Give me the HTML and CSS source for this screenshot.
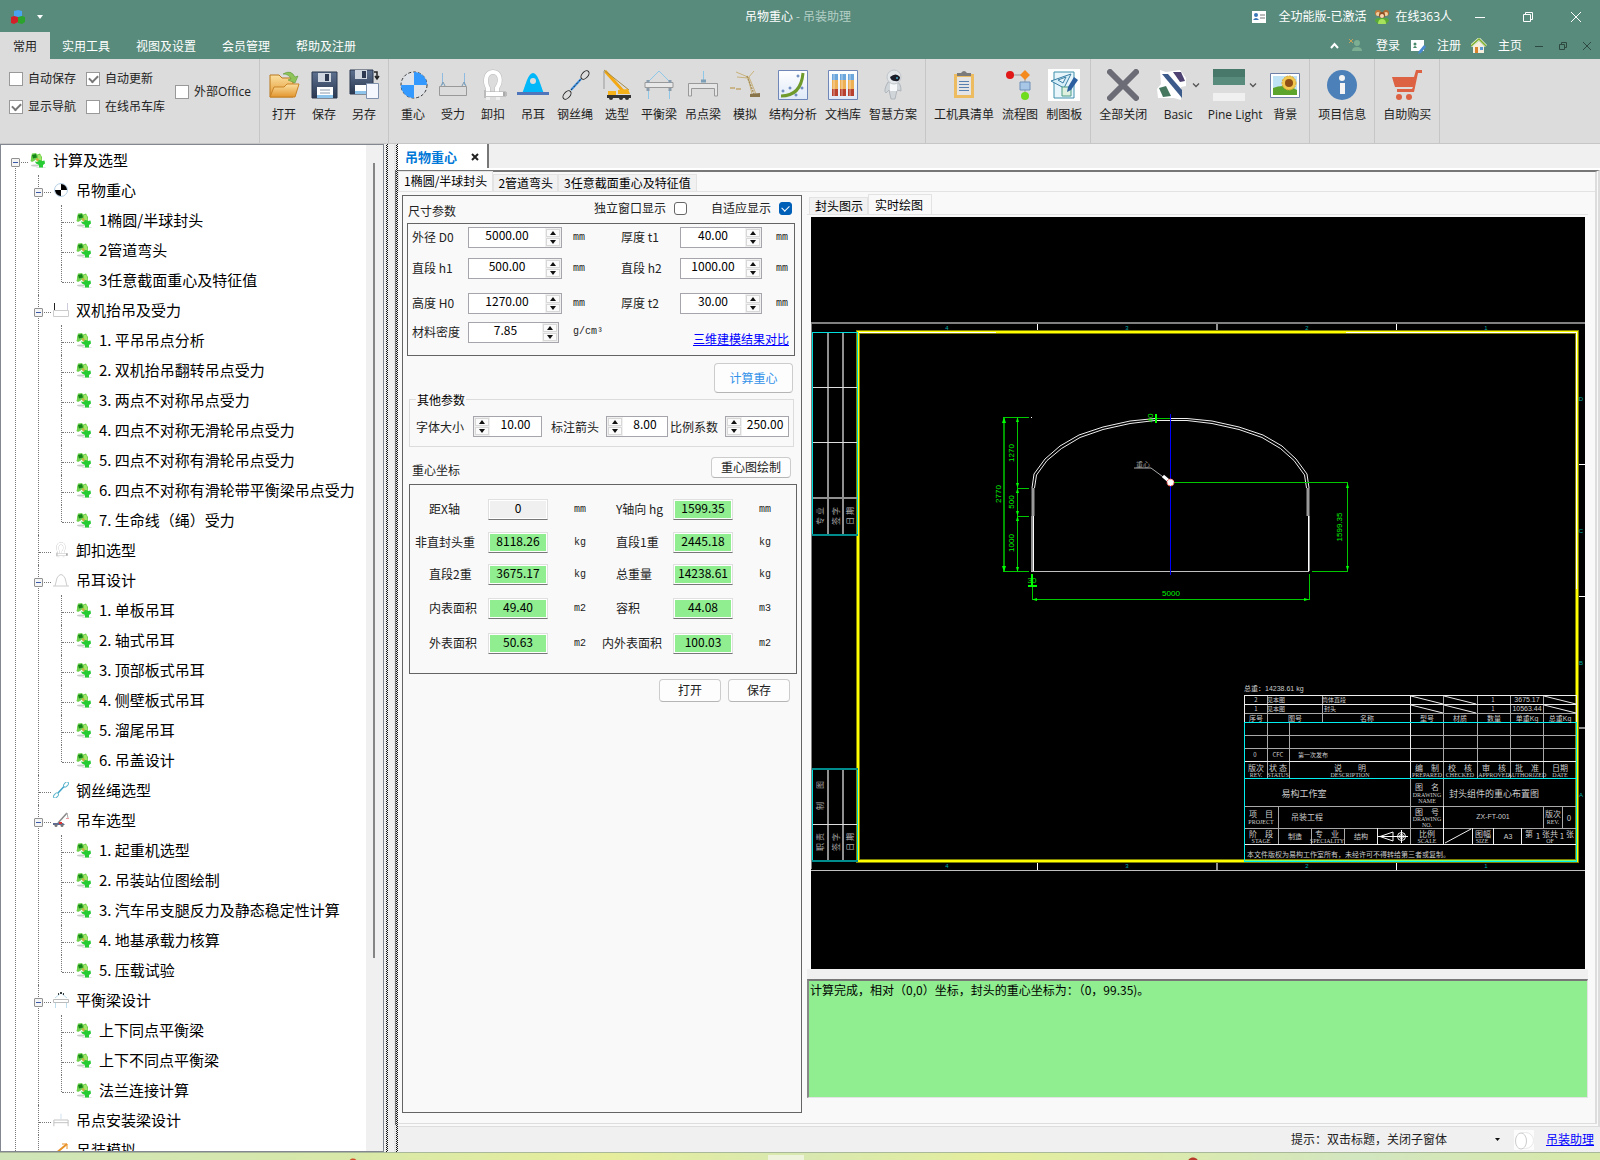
FILE: index.html
```html
<!DOCTYPE html>
<html lang="zh-CN">
<head>
<meta charset="utf-8">
<title>吊物重心 - 吊装助理</title>
<link rel="stylesheet" href="styles.css">
</head>
<body>
<svg class="defs" width="0" height="0" aria-hidden="true">
  <defs>
    <linearGradient id="gFolder" x1="0" y1="0" x2="0" y2="1"><stop offset="0" stop-color="#fbe0a0"/><stop offset="1" stop-color="#e3962f"/></linearGradient>
    <linearGradient id="gDisk" x1="0" y1="0" x2="0" y2="1"><stop offset="0" stop-color="#5d7190"/><stop offset="1" stop-color="#2b3850"/></linearGradient>
    <linearGradient id="gCard" x1="0" y1="0" x2="0" y2="1"><stop offset="0" stop-color="#ffffff"/><stop offset="1" stop-color="#dfe9f8"/></linearGradient>
  </defs>
  <symbol id="puzzle" viewBox="0 0 16 16">
    <ellipse cx="5" cy="13.500" rx="4" ry="1" fill="#c8ccc8"/><ellipse cx="11" cy="15.500" rx="5" ry=".8" fill="#dfe6df"/>
    <path d="M1 5L2 1.500 6 1 7 2.500 10 1.500 12 5 12 9 8 10 6 7.500 4 9 2 10 .5 9 1 7z" fill="#6fd24e"/>
    <path d="M2 3L6 2 7 5.500 3 6.500z" fill="#128418"/><path d="M8 3L10.500 3 11.500 8 8 8z" fill="#a4e66a"/><path d="M6 6l3 1-1 3-2-2z" fill="#c8b040"/>
    <path d="M5 9.500L8 10 9 8 12 9 14.500 8.500 15 11.500 13 13 13 15.500 9 15.500 9 13 6 11.500z" fill="#27cc35"/>
  </symbol>
  <symbol id="cgball" viewBox="0 0 16 16"><circle cx="8" cy="8" r="6.500" fill="#fff" stroke="#b4cfe6"/><path d="M8 8V2A6 6 0 0 1 14 8ZM8 8V14A6 6 0 0 1 2 8Z" fill="#000"/></symbol>
  <symbol id="lift" viewBox="0 0 16 16"><path d="M.5 8.500h15v6h-15z" fill="none" stroke="#ccc"/><path d="M1.500 1v7" stroke="#222"/><path d="M14.500 1v7" stroke="#ccd"/></symbol>
  <symbol id="shackle" viewBox="0 0 32 32"><path d="M11 25V19C7 12 9 3 16 3S25 12 20 19V25" fill="none" stroke="#bbb" stroke-width="5"/><path d="M11 25V19C7 12 9 3 16 3S25 12 20 19V25" fill="none" stroke="#fff" stroke-width="4"/><path d="M7 25h22" stroke="#aaa" stroke-width="5"/><path d="M8 25h18" stroke="#fff" stroke-width="4"/><path d="M8 21v8M29 23v4" stroke="#bbb" stroke-width="2"/><path d="M11 28v3M21 28v3" stroke="#eee" stroke-width="4"/></symbol>
  <symbol id="lug" viewBox="0 0 16 16"><path d="M0 14h16M2 14L4 6Q8-1 12 6L14 14" fill="none" stroke="#ccc"/></symbol>
  <symbol id="sling" viewBox="0 0 32 32"><path d="M12 21L22 10" stroke="#3a8fe0" stroke-width="2"/><path d="M12 21L22 10" stroke="#234" stroke-width="1" stroke-dasharray="2 2"/><ellipse cx="26" cy="6" rx="5" ry="3" transform="rotate(-48 26 6)" fill="none" stroke="currentColor"/><ellipse cx="8" cy="26" rx="5" ry="3" transform="rotate(-48 8 26)" fill="none" stroke="currentColor"/></symbol>
  <symbol id="slingmini" viewBox="0 0 16 16"><path d="M5 11L11 4.500" stroke="#3fa3c8" stroke-width="1.500"/><ellipse cx="13" cy="2.500" rx="3" ry="1.800" transform="rotate(-48 13 2.500)" fill="none" stroke="#5fb6cc"/><ellipse cx="3" cy="13.500" rx="3" ry="1.800" transform="rotate(-48 3 13.500)" fill="none" stroke="#5fb6cc"/></symbol>
  <symbol id="minicrane" viewBox="0 0 16 16"><path d="M5 11L14 1" fill="none" stroke="#888" stroke-width="1.500"/><path d="M14 1l1 5" stroke="#aaa"/><path d="M0 11h10l2 2H0z" fill="#5b6b94"/><path d="M6 10h3v2H6z" fill="#d33"/><circle cx="3" cy="13.500" r="1.500" fill="#777"/><circle cx="9" cy="13.500" r="1.500" fill="#777"/><path d="M13 6h3v1h-3z" fill="#e99"/></symbol>
  <symbol id="minibeam" viewBox="0 0 16 16"><path d="M2 6L8 1L14 6" fill="none" stroke="#bde"/><path d="M7 1h2M5 2h1M10 2h1" stroke="#000" stroke-width="1.500"/><path d="M.5 7.500h15v3h-15z" fill="#fff" stroke="#bbb"/><path d="M2.500 11v5M13.500 11v5" stroke="#bde"/></symbol>
  <symbol id="minibar" viewBox="0 0 18 16"><path d="M9 1v6" stroke="#cde"/><path d="M1 15V8h16v7M1 11h16" fill="none" stroke="#bbb"/></symbol>
  <symbol id="minisim" viewBox="0 0 16 16"><path d="M2 12L14 2" stroke="#e8922a" stroke-width="2"/><path d="M9 2h5v5" fill="none" stroke="#e8922a"/></symbol>
  <symbol id="chev" viewBox="0 0 8 8"><path d="M1 2.500l3 3 3-3" fill="none" stroke="#555" stroke-width="1.300"/></symbol>
</svg>

<header class="titlebar">
  <div class="quick">
    <svg width="16" height="16" viewBox="0 0 16 16"><path d="M4 2l4-1 4 1v5l-4 2-4-2z" fill="#4aa3ee"/><path d="M1 8l3-1 4 1v5l-4 2-3-1z" fill="#d2202a"/><path d="M8 8l4-1 3 1v5l-3 2-4-1z" fill="#2ca32c"/></svg>
    <svg width="6" height="4" viewBox="0 0 6 4"><path d="M0 0h6L3 4z" fill="#fff"/></svg>
  </div>
  <h1 class="caption">吊物重心 <span>- 吊装助理</span></h1>
  <div class="status-right">
    <svg class="idcard" width="14" height="12" viewBox="0 0 14 12"><path d="M0 0h14v12H0z" fill="#fff"/><circle cx="4" cy="4" r="2" fill="#3b78b8"/><path d="M1 9q3-4 6 0z" fill="#3b78b8"/><path d="M8 4h5M8 7h5" stroke="#777"/></svg>
    <span>全功能版-已激活</span>
    <svg class="faces" width="16" height="16" viewBox="0 0 16 16"><path d="M1 12q0-3 4-3h6q4 0 4 3l-3 3H4z" fill="#58a838"/><circle cx="4" cy="4" r="3" fill="#c07a3c"/><circle cx="12" cy="4" r="3" fill="#b06a30"/><circle cx="4" cy="5" r="2" fill="#f3cda0"/><circle cx="12" cy="5" r="2" fill="#f3cda0"/><circle cx="8" cy="6" r="3" fill="#8f4e22"/><circle cx="8" cy="7" r="2" fill="#f7d8b4"/><path d="M4 15q0-5 4-5t4 5z" fill="#a6e25c"/></svg>
    <span>在线363人</span>
    <div class="winbtns">
      <button aria-label="最小化"><svg width="12" height="12" viewBox="0 0 12 12"><path d="M1 6.500h10" stroke="#fff"/></svg></button>
      <button aria-label="还原"><svg width="12" height="12" viewBox="0 0 12 12"><path d="M1.500 3.500h7v7h-7zM3.500 3V1.500h7v7H9" fill="none" stroke="#fff"/></svg></button>
      <button aria-label="关闭"><svg width="12" height="12" viewBox="0 0 12 12"><path d="M1 1l10 10M11 1L1 11" stroke="#fff"/></svg></button>
    </div>
  </div>
</header>

<nav class="menubar">
  <button class="active">常用</button><button>实用工具</button><button>视图及设置</button><button>会员管理</button><button>帮助及注册</button>
  <div class="account">
    <svg width="9" height="8" viewBox="0 0 9 8"><path d="M1 6l3.500-4L8 6" fill="none" stroke="#fff" stroke-width="2"/></svg>
    <a href="#"><svg width="16" height="16" viewBox="0 0 16 16"><path d="M0 1l4 4M4 1L0 5" stroke="#c9a25a"/><circle cx="8" cy="5" r="3" fill="#7cae93"/><path d="M3 13q0-4 5-4t5 4z" fill="#7cae93"/></svg>登录</a>
    <a href="#"><svg width="16" height="16" viewBox="0 0 16 16"><path d="M1 2h13v11H1z" fill="#fff"/><circle cx="5" cy="6" r="1.500" fill="#4a8a6a"/><path d="M3 10q2-4 4 0z" fill="#4a8a6a"/><path d="M14 7l2 2-5 6-3 1 1-3z" fill="#4a8ad0"/></svg>注册</a>
    <a href="#"><svg width="16" height="16" viewBox="0 0 16 16"><path d="M2 8v7h11V8L8 3z" fill="#f6efe0"/><path d="M0 8l8-7 7 7" fill="none" stroke="#e8f4d8" stroke-width="3"/><path d="M0 8l8-7 7 7" fill="none" stroke="#7fae2e" stroke-width="1.500"/><path d="M4 9h3v6H4z" fill="#d8832c"/><path d="M9 9h3v3H9z" fill="#5b9bd5"/></svg>主页</a>
    <div class="childbtns">
      <button aria-label="最小化子窗体"><svg width="10" height="10" viewBox="0 0 10 10"><path d="M1 5.500h8" stroke="#2e4a40"/></svg></button>
      <button aria-label="还原子窗体"><svg width="10" height="10" viewBox="0 0 10 10"><path d="M1.500 3.500h5v5h-5zM3.500 3V1.500h5v5H7" fill="none" stroke="#2e4a40"/></svg></button>
      <button aria-label="关闭子窗体"><svg width="10" height="10" viewBox="0 0 10 10"><path d="M1 1l8 8M9 1L1 9" stroke="#2e4a40"/></svg></button>
    </div>
  </div>
</nav>

<section class="ribbon">
  <div class="group checks">
    <div class="c1"><label><input type="checkbox">自动保存</label><label><input type="checkbox" checked>显示导航</label></div>
    <div class="c2"><label><input type="checkbox" checked>自动更新</label><label><input type="checkbox">在线吊车库</label></div>
    <div class="c3"><label><input type="checkbox">外部Office</label></div>
  </div>
  <div class="group">
    <button><svg viewBox="0 0 32 32"><path d="M2 28V6h9l3 3h11v19z" fill="url(#gFolder)" stroke="#b9781c"/><path d="M2 28L6 18h10l3-3h12l-4 13z" fill="url(#gFolder)" stroke="#c98326"/><path d="M15 5q8-5 12 3l3-1-3 7-7-3 3-1q-2-5-8-5z" fill="#8fc45a" stroke="#4e8a2a" stroke-width=".5"/></svg>打开</button>
    <button><svg viewBox="0 0 32 32"><path d="M4 3h25v26H4z" fill="url(#gDisk)" stroke="#2b3850"/><path d="M10 4h13v9H10z" fill="#cfd6e0"/><path d="M17 5h4v7h-4z" fill="#2b3850"/><path d="M9 18h16v11H9z" fill="#fff"/><path d="M9 26h16v3H9z" fill="#8cc4ec"/><path d="M12 21h10M12 24h10" stroke="#8899aa"/></svg>保存</button>
    <button><svg viewBox="0 0 32 32"><path d="M2 1h23v24H2z" fill="url(#gDisk)" stroke="#2b3850"/><path d="M7 1h12v9H7z" fill="#cfd6e0"/><path d="M14 2h4v7h-4z" fill="#2b3850"/><path d="M7 16h13v9H7z" fill="#fff"/><path d="M7 22h13v3H7z" fill="#8cc4ec"/><path d="M18.500 14.500h12v15h-12z" fill="#f4f7fd" stroke="#7f90ad"/><path d="M26 3h3v6M27 7l2 3 2-3" fill="none" stroke="#222" stroke-width="1.500"/></svg>另存</button>
  </div>
  <div class="group">
    <button><svg viewBox="0 0 32 32"><circle cx="17" cy="16" r="13" fill="#dfe3e8" stroke="#333" stroke-dasharray="3 2"/><path d="M17 16V3A13 13 0 0 1 30 16ZM17 16V29A13 13 0 0 1 4 16Z" fill="#3399ff"/></svg>重心</button>
    <button><svg viewBox="0 0 32 32"><path d="M5.500 4v12M27.500 4v12" stroke="#8fbbe0"/><path d="M2.500 17.500h27v9h-27z" fill="none" stroke="#999"/><path d="M4 17l2-4 2 4M25 17l2-4 2 4" fill="none" stroke="#7a9ab4"/></svg>受力</button>
    <button><svg><use href="#shackle"/></svg>卸扣</button>
    <button><svg viewBox="0 0 32 32"><path d="M5 25L10 11Q16-3 22 11L27 25z" fill="#00b7f9"/><circle cx="16" cy="12" r="3" fill="#dcdcdc"/><path d="M0 23h32v3H0z" fill="#4f76bb"/></svg>吊耳</button>
    <button><svg><use href="#sling"/></svg>钢丝绳</button>
    <button><svg viewBox="0 0 32 32"><path d="M4 2L23 23" stroke="#f3a811" stroke-width="3"/><path d="M3 1L28 21" fill="none" stroke="#a58a40" stroke-width="1"/><path d="M3 2v18" stroke="#999"/><path d="M7 22h8v6H7zM17 21l10-1 2 5H17z" fill="#f6b21a"/><path d="M6 26h24v3H6z" fill="#333"/><circle cx="10" cy="29" r="2" fill="#333"/><circle cx="20" cy="29" r="2" fill="#333"/><circle cx="26" cy="29" r="2" fill="#333"/></svg>选型</button>
    <button><svg viewBox="0 0 32 32"><path d="M5 13L16 2L27 13" fill="none" stroke="#8fc7e8"/><path d="M2 13.500h28v5H2z" fill="#e8e8e8" stroke="#999"/><path d="M5.500 19v11M26.500 19v11" stroke="#8fc7e8"/><path d="M5 11v3M27 11v3M5 19v3M27 19v3" stroke="#8a9cab" stroke-width="3"/></svg>平衡梁</button>
    <button><svg viewBox="0 0 32 32"><path d="M16.500 2v10" stroke="#8fc7e8"/><path d="M14 12h5" stroke="#7d9fb8" stroke-width="3"/><path d="M1.500 27V14.500h29V27h-3v-7.500h-23V27z" fill="#e6e6e6" stroke="#999"/></svg>吊点梁</button>
    <button><svg viewBox="0 0 32 32"><path d="M7 3l12 5 4 17M8 8l11 1 6-7M20 8l7 17" fill="none" stroke="#c9b27c"/><path d="M18 7l7 18" stroke="#a8905a" stroke-width="1.500" stroke-dasharray="2 1"/><path d="M21 25l10-1v4H21z" fill="#8a744a"/><path d="M1 19h5M7 20h5" stroke="#c9b489" stroke-width="2"/></svg>模拟</button>
    <button><svg viewBox="0 0 32 32"><path d="M1.500 1.500h29v29h-29z" fill="url(#gCard)" stroke="#6f86b8"/><path d="M4 27Q24 27 26 4" fill="none" stroke="#6f9a2c" stroke-width="3"/><g fill="none" stroke="#4a6fae"><circle cx="6" cy="22" r="1"/><circle cx="13" cy="19" r="1"/><circle cx="21" cy="7" r="1"/><circle cx="25" cy="19" r="1"/><circle cx="19" cy="26" r="1"/></g></svg>结构分析</button>
    <button><svg viewBox="0 0 32 32"><path d="M1.500 1.500h29v29h-29z" fill="url(#gCard)" stroke="#6f86b8"/><path d="M5 5h6v22H5zM13 5h6v22h-6zM21 5h6v22h-6z" fill="#b8402f"/><path d="M5 11h6v9H5zM13 11h6v9h-6zM21 11h6v9h-6z" fill="#eeb055"/><path d="M5 5h6v6H5zM13 5h6v6h-6zM21 5h6v6h-6z" fill="#6ba6dc"/><path d="M7 5v22M15 5v22M23 5v22" stroke="#fff" stroke-opacity=".5"/></svg>文档库</button>
    <button><svg viewBox="0 0 32 32"><path d="M11 13q-5 9-2 11l3-3 2 9h4l2-9 4 1q0-8-4-9z" fill="#d0d5da" stroke="#b0b6bc"/><path d="M13 14h7v8h-7z" fill="#f6f8fa"/><circle cx="17" cy="8" r="7" fill="#e3e7ea" stroke="#c0c5ca"/><path d="M13 8q6-5 10 0 0 5-5 4-4 0-5-4z" fill="#1b1d28"/><circle cx="20" cy="9" r="1" fill="#4ac"/></svg>智慧方案</button>
  </div>
  <div class="group">
    <button><svg viewBox="0 0 32 32"><path d="M6 5h20v24H6z" fill="#eebc60"/><path d="M9 8h14v18H9z" fill="#e4e4e4"/><path d="M9 7h14V4h-4q-3-4-6 0H9z" fill="#7b7b7b"/><path d="M11 12.500h10M11 15.500h10M11 18.500h10M11 21.500h10" stroke="#5580b0"/></svg>工机具清单</button>
    <button><svg viewBox="0 0 32 32"><path d="M9 6h12v20" fill="none" stroke="#999"/><circle cx="6" cy="6" r="4" fill="#e01818"/><path d="M21 1l5 5-5 5-5-5z" fill="#f58a1f"/><path d="M16 13h10v8H16z" fill="#a8c6e6" stroke="#6f90b8"/><circle cx="21" cy="27" r="4" fill="#6fdc1e"/></svg>流程图</button>
    <button><svg viewBox="0 0 32 32"><path d="M0 0h32v32H0z" fill="#fff"/><path d="M6 3h20v26H6z" fill="#e8f5fb" stroke="#3f91ac" stroke-width="1"/><path d="M3 12l20-7-7 14zM10 11l8-3-3 6z" fill="#d5eef8" stroke="#3a7fa5" fill-rule="evenodd"/><path d="M14 18h9v9h-9z" fill="#dff0df" stroke="#4b9b86"/><path d="M26 8l4 3-7 10-4 2 1-5z" fill="#2b5fa0"/></svg>制图板</button>
  </div>
  <div class="group">
    <button><svg viewBox="0 0 32 32"><path d="M3 3l26 26M29 3L3 29" stroke="#6c6c76" stroke-width="6" stroke-linecap="round"/></svg>全部关闭</button>
    <button class="skin"><span><svg viewBox="0 0 32 32"><path d="M4 1l6 2 14-2 6 8v8l-5 1v13l-7-2H2l-1-9 4-5z" fill="#fff"/><path d="M6 5h6l14 16v8z" fill="#3c5a8a"/><path d="M17 3h8l4 9-5 1z" fill="#4e4373"/><path d="M3 19l7-2 5 10-8 1z" fill="#45775f"/></svg><svg class="chev"><use href="#chev"/></svg></span>Basic</button>
    <button class="skin pine"><span><svg viewBox="0 0 32 32"><path d="M0 0h32v8H0z" fill="#47786a"/><path d="M0 8h32v8H0z" fill="#588b7c"/><path d="M0 16h32v8H0z" fill="#dcdcdc"/><path d="M0 24h32v8H0z" fill="#f0f0f0"/></svg><svg class="chev"><use href="#chev"/></svg></span>Pine Light</button>
    <button><svg viewBox="0 0 32 32"><path d="M1.500 4.500h29v24h-29z" fill="#fff" stroke="#6f80a8"/><path d="M4 7h24v19H4z" fill="#bfe2f5"/><path d="M4 19q12-5 24 2v5H4z" fill="#5da42c"/><circle cx="20" cy="14" r="7" fill="#f2c94e" stroke="#dca634" stroke-dasharray="2 1"/><circle cx="20" cy="14" r="4" fill="#8f4e16"/></svg>背景</button>
  </div>
  <div class="group">
    <button><svg viewBox="0 0 32 32"><circle cx="16" cy="16" r="15" fill="#4c80b8"/><circle cx="16" cy="9" r="3" fill="#f4f4f4"/><path d="M14 14h5v11h-5z" fill="#f4f4f4"/></svg>项目信息</button>
  </div>
  <div class="group">
    <button><svg viewBox="0 0 32 32"><path d="M31 1v3h-4l-4 19H6v-3h15l1-2H4L1 8h22l2-7z" fill="#dc6243"/><circle cx="8" cy="28" r="3" fill="#dc6243"/><circle cx="18" cy="28" r="3" fill="#dc6243"/></svg>自助购买</button>
  </div>
</section>

<main class="shell">
  <aside class="navigator">
    <ul class="tree">
      <li class="root"><div class="row"><button class="tg" aria-label="折叠"></button><svg><use href="#puzzle"/></svg>计算及选型</div>
        <ul>
          <li><div class="row"><button class="tg" aria-label="折叠"></button><svg><use href="#cgball"/></svg>吊物重心</div>
            <ul>
              <li><div class="row"><svg><use href="#puzzle"/></svg>1椭圆/半球封头</div></li>
              <li><div class="row"><svg><use href="#puzzle"/></svg>2管道弯头</div></li>
              <li><div class="row"><svg><use href="#puzzle"/></svg>3任意截面重心及特征值</div></li>
            </ul></li>
          <li><div class="row"><button class="tg" aria-label="折叠"></button><svg><use href="#lift"/></svg>双机抬吊及受力</div>
            <ul>
              <li><div class="row"><svg><use href="#puzzle"/></svg>1. 平吊吊点分析</div></li>
              <li><div class="row"><svg><use href="#puzzle"/></svg>2. 双机抬吊翻转吊点受力</div></li>
              <li><div class="row"><svg><use href="#puzzle"/></svg>3. 两点不对称吊点受力</div></li>
              <li><div class="row"><svg><use href="#puzzle"/></svg>4. 四点不对称无滑轮吊点受力</div></li>
              <li><div class="row"><svg><use href="#puzzle"/></svg>5. 四点不对称有滑轮吊点受力</div></li>
              <li><div class="row"><svg><use href="#puzzle"/></svg>6. 四点不对称有滑轮带平衡梁吊点受力</div></li>
              <li><div class="row"><svg><use href="#puzzle"/></svg>7. 生命线（绳）受力</div></li>
            </ul></li>
          <li><div class="row"><svg><use href="#shackle"/></svg>卸扣选型</div></li>
          <li><div class="row"><button class="tg" aria-label="折叠"></button><svg><use href="#lug"/></svg>吊耳设计</div>
            <ul>
              <li><div class="row"><svg><use href="#puzzle"/></svg>1. 单板吊耳</div></li>
              <li><div class="row"><svg><use href="#puzzle"/></svg>2. 轴式吊耳</div></li>
              <li><div class="row"><svg><use href="#puzzle"/></svg>3. 顶部板式吊耳</div></li>
              <li><div class="row"><svg><use href="#puzzle"/></svg>4. 侧壁板式吊耳</div></li>
              <li><div class="row"><svg><use href="#puzzle"/></svg>5. 溜尾吊耳</div></li>
              <li><div class="row"><svg><use href="#puzzle"/></svg>6. 吊盖设计</div></li>
            </ul></li>
          <li><div class="row"><svg><use href="#slingmini"/></svg>钢丝绳选型</div></li>
          <li><div class="row"><button class="tg" aria-label="折叠"></button><svg><use href="#minicrane"/></svg>吊车选型</div>
            <ul>
              <li><div class="row"><svg><use href="#puzzle"/></svg>1. 起重机选型</div></li>
              <li><div class="row"><svg><use href="#puzzle"/></svg>2. 吊装站位图绘制</div></li>
              <li><div class="row"><svg><use href="#puzzle"/></svg>3. 汽车吊支腿反力及静态稳定性计算</div></li>
              <li><div class="row"><svg><use href="#puzzle"/></svg>4. 地基承载力核算</div></li>
              <li><div class="row"><svg><use href="#puzzle"/></svg>5. 压载试验</div></li>
            </ul></li>
          <li><div class="row"><button class="tg" aria-label="折叠"></button><svg><use href="#minibeam"/></svg>平衡梁设计</div>
            <ul>
              <li><div class="row"><svg><use href="#puzzle"/></svg>上下同点平衡梁</div></li>
              <li><div class="row"><svg><use href="#puzzle"/></svg>上下不同点平衡梁</div></li>
              <li><div class="row"><svg><use href="#puzzle"/></svg>法兰连接计算</div></li>
            </ul></li>
          <li><div class="row"><svg><use href="#minibar"/></svg>吊点安装梁设计</div></li>
          <li><div class="row"><svg><use href="#minisim"/></svg>吊装模拟</div></li>
        </ul></li>
    </ul>
    <div class="scroll"><div class="thumb"></div></div>
  </aside>
  <div class="splitter"></div>
  <div class="edge"></div>

  <section class="workspace">
    <div class="doctabs"><div class="doctab">吊物重心<button aria-label="关闭标签"><svg width="8" height="8" viewBox="0 0 8 8"><path d="M1 1l6 6M7 1L1 7" stroke="#222" stroke-width="2"/></svg></button></div></div>
    <div class="page">
      <div class="subtabs"><button class="on">1椭圆/半球封头</button><button>2管道弯头</button><button>3任意截面重心及特征值</button></div>
      <div class="columns">
        <form class="params">
          <div class="head">
            <h2>尺寸参数</h2>
            <label>独立窗口显示<input type="checkbox"></label>
            <label class="fit">自适应显示<input type="checkbox" checked></label>
          </div>
          <div class="sizes">
            <label for="d0">外径 D0</label><span class="spin w94"><input id="d0" value="5000.00"><i class="ud"><button type="button" aria-label="增"></button><button type="button" aria-label="减"></button></i></span><span class="unit">mm</span>
            <label for="t1">厚度 t1</label><span class="spin w82"><input id="t1" value="40.00"><i class="ud"><button type="button" aria-label="增"></button><button type="button" aria-label="减"></button></i></span><span class="unit">mm</span>
            <label for="h1">直段 h1</label><span class="spin w94"><input id="h1" value="500.00"><i class="ud"><button type="button" aria-label="增"></button><button type="button" aria-label="减"></button></i></span><span class="unit">mm</span>
            <label for="h2">直段 h2</label><span class="spin w82"><input id="h2" value="1000.00"><i class="ud"><button type="button" aria-label="增"></button><button type="button" aria-label="减"></button></i></span><span class="unit">mm</span>
            <label for="hh">高度 H0</label><span class="spin w94"><input id="hh" value="1270.00"><i class="ud"><button type="button" aria-label="增"></button><button type="button" aria-label="减"></button></i></span><span class="unit">mm</span>
            <label for="t2">厚度 t2</label><span class="spin w82"><input id="t2" value="30.00"><i class="ud"><button type="button" aria-label="增"></button><button type="button" aria-label="减"></button></i></span><span class="unit">mm</span>
            <label for="rho">材料密度</label><span class="spin w91"><input id="rho" value="7.85"><i class="ud"><button type="button" aria-label="增"></button><button type="button" aria-label="减"></button></i></span><span class="unit">g/cm³</span>
            <a class="compare" href="#">三维建模结果对比</a>
          </div>
          <button type="button" class="btn calc">计算重心</button>
          <fieldset class="others">
            <legend>其他参数</legend>
            <label for="fs">字体大小</label><span class="spin w69"><i class="ud"><button type="button" aria-label="增"></button><button type="button" aria-label="减"></button></i><input id="fs" value="10.00"></span>
            <label for="ar">标注箭头</label><span class="spin w62"><i class="ud"><button type="button" aria-label="增"></button><button type="button" aria-label="减"></button></i><input id="ar" value="8.00"></span>
            <label for="sc">比例系数</label><span class="spin w64"><i class="ud"><button type="button" aria-label="增"></button><button type="button" aria-label="减"></button></i><input id="sc" value="250.00"></span>
          </fieldset>
          <div class="head2"><h2>重心坐标</h2><button type="button" class="btn draw">重心图绘制</button></div>
          <div class="results">
            <label for="r1">距X轴</label><input id="r1" class="plain" value="0" readonly><span class="unit">mm</span>
            <label for="r2">Y轴向 hg</label><input id="r2" value="1599.35" readonly><span class="unit">mm</span>
            <label for="r3" class="wide">非直封头重</label><input id="r3" value="8118.26" readonly><span class="unit">kg</span>
            <label for="r4">直段1重</label><input id="r4" value="2445.18" readonly><span class="unit">kg</span>
            <label for="r5">直段2重</label><input id="r5" value="3675.17" readonly><span class="unit">kg</span>
            <label for="r6">总重量</label><input id="r6" value="14238.61" readonly><span class="unit">kg</span>
            <label for="r7">内表面积</label><input id="r7" value="49.40" readonly><span class="unit">m2</span>
            <label for="r8">容积</label><input id="r8" value="44.08" readonly><span class="unit">m3</span>
            <label for="r9">外表面积</label><input id="r9" value="50.63" readonly><span class="unit">m2</span>
            <label for="r10" class="wide">内外表面积</label><input id="r10" value="100.03" readonly><span class="unit">m2</span>
          </div>
          <div class="actions"><button type="button" class="btn">打开</button><button type="button" class="btn">保存</button></div>
        </form>

        <div class="view">
          <div class="viewtabs"><button>封头图示</button><button class="on">实时绘图</button></div>
          <div class="canvas">
          <svg viewBox="811 217 774 752" role="img" aria-label="封头组件的重心布置图">
            <path d="M811 324V869" stroke="#fff"/>
            <g shape-rendering="crispEdges" fill="none">
              <path d="M811 323h774" stroke="#808080" stroke-width="2"/>
              <path d="M811 870.500h774" stroke="#c0c0c0"/>
              <path d="M1037.500 324v8M1396.500 324v8M1037.500 862v8M1396.500 862v8M1577 464.500h8M1577 596.500h8" stroke="#fff"/>
              <path d="M1217 324v8M1217 862v8M1577 728h8" stroke="#909090" stroke-width="2"/>
              <path d="M858 332H1577V861H858Z" stroke="#7f7f00" stroke-width="4"/>
              <path d="M858 332H1577V861H858Z" stroke="#ff0" stroke-width="2"/>
              <path d="M859 332.500H996M1346 332.500H1576.500V589" stroke="#fff"/>
              <path d="M1245 861H1576" stroke="#80ff60" stroke-width="2"/>
              <path d="M828 333V535M843 333V535M828 770V861M843 770V861M812 498h45" stroke="#909090" stroke-width="2"/>
              <path d="M812 387.500h45M812 442.500h45M812 824.500h45" stroke="#ddd"/>
              <path d="M812 332.500H857.500V535M812.500 332V535M812.500 769V861M857.500 769V861" stroke="#0dd"/>
              <path d="M812 535h46M812 769h46M812 861h46" stroke="#008c8c" stroke-width="2"/>
            </g>
            <g class="zone"><text x="947" y="330">4</text><text x="1127" y="330">3</text><text x="1307" y="330">2</text><text x="1486" y="330">1</text><text x="947" y="868">4</text><text x="1127" y="868">3</text><text x="1307" y="868">2</text><text x="1486" y="868">1</text><text x="1581" y="401">D</text><text x="1581" y="533">C</text><text x="1581" y="665">B</text><text x="1581" y="797">A</text></g>
            <g class="side">
              <text transform="translate(823 516) rotate(-90)">专 业</text><text transform="translate(839 516) rotate(-90)">签 字</text><text transform="translate(853 516) rotate(-90)">日 期</text>
              <text transform="translate(823 806) rotate(-90)">制</text><text transform="translate(823 785) rotate(-90)">图</text>
              <text transform="translate(823 842) rotate(-90)">职 责</text><text transform="translate(839 842) rotate(-90)">签 字</text><text transform="translate(853 842) rotate(-90)">日 期</text>
            </g>
            <g fill="none" stroke="#eee">
              <path d="M1032 488L1034 474L1045 459L1060 446L1079 435L1103 427L1130 421L1155 418.500H1187L1212 421L1239 427L1263 435L1282 446L1296 459L1307 474L1309 488"/>
              <path d="M1034.500 488L1036.500 475L1047 460.500L1061.500 448.500L1080 437.500L1103 429.500L1130 423.500L1155 420.500H1187L1212 423.500L1239 429.500L1262 437.500L1280.500 448.500L1294 460.500L1304.500 475L1306.500 488"/>
              <path d="M1033 488V516M1308 488V516" stroke="#999" stroke-width="3"/>
              <path d="M1032 516V571M1309 516V571" stroke="#909090" stroke-width="2"/>
              <path d="M1033.500 516V571M1308.500 516V571" stroke="#fff"/>
              <path d="M1031 571.500H1309" stroke="#c0c0c0"/>
              <path d="M1134 468H1151L1170 482" stroke="#aaa"/><path d="M1163 476L1170 482" stroke="#fff" stroke-width="3"/>
            </g>
            <path d="M1170.500 414V575" stroke="#00f" shape-rendering="crispEdges"/>
            <g fill="none" stroke="#00c800" shape-rendering="crispEdges">
              <path d="M1004 417V571" stroke="#009600" stroke-width="2"/>
              <path d="M1017.500 417V571M1003 417.500H1029M1017 488.500H1029M1017 516.500H1029M1003 571.500H1029"/>
              <path d="M1171 482.500H1347.500V571.500H1312M1032.500 586V599.500H1309.500V574M1157 418.500H1170"/>
              <path d="M1028 586H1037M1156 414V423M1032 574V586" stroke="#0f0" stroke-width="2"/>
            </g>
            <path d="M1002 423l2-6 2 6zM1002 566l2 6 2-6zM1016 422l1.500-5 1.500 5zM1016 567l1.500 5 1.500-5zM1016 483l1.500 5 1.500-5zM1016 493l1.500-5 1.500 5zM1016 511l1.500 5 1.500-5zM1016 521l1.500-5 1.500 5zM1346 488l1.500-5 1.500 5zM1346 566l1.500 5 1.500-5zM1037 598l-5 1.500 5 1.500zM1304 598l5 1.500-5 1.500z" fill="#0f0"/>
            <path d="M1031 417h1v1h-1z" fill="#fff"/>
            <circle cx="1170.500" cy="482.500" r="3.500" fill="#fff" stroke="#f33" stroke-dasharray="2 1"/>
            <g class="dim">
              <text transform="translate(1001 494) rotate(-90)">2770</text><text transform="translate(1014 453) rotate(-90)">1270</text><text transform="translate(1014 502) rotate(-90)">500</text><text transform="translate(1014 543) rotate(-90)">1000</text><text transform="translate(1342 527) rotate(-90)">1599.35</text>
              <text x="1171" y="596">5000</text><text x="1032" y="583">30</text><text transform="translate(1153 418) rotate(-90)">40</text>
            </g>
            <text class="cg" x="1143" y="467">重心</text>

            <g shape-rendering="crispEdges" fill="none">
              <path d="M1267 695V722M1322 695V722M1410 695V778M1443 695V778M1477 695V778M1510 695V778M1543 695V778M1267 722V778M1289 722V778M1244 735.500H1576M1244 748.500H1576M1410 778V844M1443 778V844M1244 806H1576M1244 828H1576M1278 806V844M1543 806V828M1562 806V828M1311 828V844M1344 828V844M1244 713.500H1576" stroke="#a8a8a8"/>
              <path d="M1244.500 722V695.500H1576.500V722M1244 704.500H1576M1244 761.500H1576M1410.500 695V778M1443.500 806V844M1377.500 828V844M1472.500 828V844M1493.500 828V844M1521.500 828V844M1244 844.500H1576" stroke="#eee"/>
              <path d="M1244.500 722.500H1576.500V861H1244.500ZM1244 778.500H1576" stroke="#0ee"/>
            </g>
            <path d="M1411 696l32 8M1444 696l32 8M1544 696l32 8M1411 705l32 8M1444 705l32 8M1544 705l32 8M1445 843L1471 829" stroke="#eee"/>
            <g fill="none" stroke="#fff"><path d="M1380 836.500L1393 832V841ZM1378 836.500H1408M1401.500 830V843"/><circle cx="1401.500" cy="836.500" r="4"/><circle cx="1401.500" cy="836.500" r="2"/></g>
            <g class="tb">
              <text class="s lead" x="1244" y="691">总重：14238.61 kg</text>
              <text class="t" x="1256" y="702">2</text><text class="t" x="1276" y="702">见本图</text><text class="t" x="1334" y="702">筒体直段</text><text class="t" x="1493" y="702">1</text><text class="s" x="1527" y="702">3675.17</text>
              <text class="t" x="1256" y="711">1</text><text class="t" x="1276" y="711">见本图</text><text class="t" x="1330" y="711">封头</text><text class="t" x="1493" y="711">1</text><text class="s" x="1527" y="711">10563.44</text>
              <text class="s" x="1256" y="721">序号</text><text class="s" x="1295" y="721">图号</text><text class="s" x="1367" y="721">名称</text><text class="s" x="1427" y="721">型号</text><text class="s" x="1460" y="721">材质</text><text class="s" x="1494" y="721">数量</text><text class="s" x="1527" y="721">单重Kg</text><text class="s" x="1560" y="721">总重Kg</text>
              <text class="t" x="1255" y="757">0</text><text class="t" x="1278" y="757">CFC</text><text class="t" x="1313" y="757">第一次发布</text>
              <text x="1256" y="771">版次</text><text x="1278" y="771">状 态</text><text x="1350" y="771">说　　明</text><text x="1427" y="771">编　制</text><text x="1460" y="771">校　核</text><text x="1494" y="771">审　核</text><text x="1527" y="771">批　准</text><text x="1560" y="771">日期</text>
              <g class="en"><text x="1256" y="777">REV.</text><text x="1278" y="777">STATUS</text><text x="1350" y="777">DESCRIPTION</text><text x="1427" y="777">PREPARED</text><text x="1460" y="777">CHECKED</text><text x="1494" y="777">APPROVED</text><text x="1527" y="777">AUTHORIZED</text><text x="1560" y="777">DATE</text>
              <text x="1427" y="797">DRAWING</text><text x="1427" y="803">NAME</text><text x="1261" y="824">PROJECT</text><text x="1427" y="821">DRAWING</text><text x="1427" y="827">NO.</text><text x="1553" y="824">REV.</text><text x="1261" y="843">STAGE</text><text x="1327" y="843">SPECIALITY</text><text x="1427" y="843">SCALE</text><text x="1482" y="843">SIZE</text><text x="1550" y="843">OF</text></g>
              <text class="l" x="1304" y="797">易构工作室</text><text x="1427" y="790">图　名</text><text class="l" x="1494" y="797">封头组件的重心布置图</text>
              <text x="1261" y="817">项　目</text><text x="1307" y="820">吊装工程</text><text x="1427" y="815">图　号</text><text class="s" x="1493" y="819">ZX-FT-001</text><text x="1553" y="817">版次</text><text x="1569" y="821">0</text>
              <text x="1261" y="837">阶　段</text><text class="s" x="1295" y="839">制造</text><text x="1327" y="837">专　业</text><text class="s" x="1361" y="839">结构</text><text x="1427" y="837">比例</text><text x="1483" y="837">图幅</text><text class="s" x="1508" y="839">A3</text><text x="1529" y="837">第</text><text x="1538" y="839">1</text><text x="1550" y="837">张共</text><text x="1562" y="839">1</text><text x="1570" y="837">张</text>
              <text class="s lead" x="1247" y="857">本文件版权为易构工作室所有，未经许可不得转给第三者或复制。</text>
            </g>
          </svg>
          </div>
          <textarea class="log" aria-label="计算信息" readonly>计算完成，相对（0,0）坐标，封头的重心坐标为：（0，99.35)。</textarea>
        </div>
      </div>
    </div>
    <footer class="statusbar">
      <span>提示：双击标题，关闭子窗体</span>
      <svg class="drop" width="5" height="3" viewBox="0 0 5 3"><path d="M0 0h5L2.500 3z" fill="#111"/></svg>
      <svg class="toggle" width="20" height="20" viewBox="0 0 20 20"><path d="M0 0h20v20H0z" fill="#fcfcfc"/><rect x="2.500" y="2.500" width="17" height="16" rx="8" fill="#fff" stroke="#e8e8e8"/><ellipse cx="7" cy="11" rx="5.500" ry="8" fill="#fff" stroke="#ccc"/></svg>
      <a href="#">吊装助理</a>
    </footer>
  </section>
</main>
<div class="wallpaper"></div>
</body>
</html>
```
FILE: styles.css
```css
* { box-sizing: border-box; }
body {
  margin: 0; height: 100vh; display: flex; flex-direction: column; overflow: hidden;
  font: 12px/16px "Open Sans", "Noto Sans CJK SC", sans-serif; color: #222; background: #f0f0f0;
}
button { font: inherit; color: inherit; border: 0; background: none; padding: 0; margin: 0; }
h1, h2 { font: inherit; margin: 0; }
svg { display: block; flex: none; }
.defs { position: absolute; }

/* Title bar */
.titlebar { height: 32px; flex: none; display: grid; grid-template-columns: 1fr auto 1fr; align-items: center; padding-top: 2px; background: #588b7c; color: #fff; }
.quick { display: flex; align-items: center; gap: 11px; padding-left: 10px; }
.caption { margin-right: 4px; }
.caption span { color: #b4cfc6; }
.status-right { display: flex; align-items: center; justify-content: flex-end; }
.idcard { margin-right: 13px; }
.faces { margin: 0 5px 0 8px; }
.winbtns { display: flex; margin-left: 4px; }
.winbtns button { width: 48px; height: 30px; display: grid; place-items: center; }

/* Menu tabs */
.menubar { height: 27px; flex: none; display: flex; background: #588b7c; color: #fff; }
.menubar > button { padding: 2px 13px 0; }
.menubar > button:nth-child(n+2) { padding: 2px 14px 0 12px; }
.menubar > .active { background: #dcdcdc; color: #222; }
.account { margin-left: auto; display: flex; align-items: center; gap: 10px; padding: 1px 1px 0 0; }
.account a { display: flex; align-items: center; gap: 11px; color: #fff; text-decoration: none; }
.childbtns { display: flex; margin-left: -5px; }
.childbtns button { width: 24px; height: 24px; display: grid; place-items: center; }

/* Ribbon */
.ribbon { height: 85px; flex: none; display: flex; background: #dcdcdc; border-bottom: 1px solid #c6c6c6; }
.group { display: flex; padding: 0 4px; border-right: 1px solid #c6c6c6; }
.group button { min-width: 40px; padding: 10px 4px 0; display: flex; flex-direction: column; align-items: center; gap: 6px; white-space: nowrap; }
.group button svg { width: 32px; height: 32px; }
.group button span { display: flex; align-items: center; gap: 4px; }
.group button svg.chev { width: 8px; height: 8px; }
.group .skin { width: 54px; }
.group .pine { width: 60px; }
.checks { width: 260px; padding: 6px 0 0 9px; }
.checks label { display: flex; align-items: center; gap: 5px; height: 28px; white-space: nowrap; }
.c1 { width: 77px; }
.c2 { width: 89px; }
.c3 { padding-top: 13px; }
input[type="checkbox"] { appearance: none; margin: 0; width: 14px; height: 14px; border: 1px solid #999; background: #fff; display: grid; place-items: center; flex: none; }
input[type="checkbox"]:checked::after { content: ""; width: 7px; height: 4px; border: solid #777; border-width: 0 0 2px 2px; transform: rotate(-45deg); margin-bottom: 2px; }

/* Navigator */
.shell { flex: 1; min-height: 0; display: flex; }
.navigator { width: 384px; flex: none; display: flex; border: 1px solid #828790; background: #fff; overflow: hidden; }
.tree { flex: 1; }
.tree, .tree ul { list-style: none; margin: 0; padding: 0; }
.tree ul { margin-left: 23px; }
.tree li { position: relative; }
.tree li::before { content: ""; position: absolute; left: 14px; top: 0; bottom: 0; border-left: 1px dotted #777; }
.tree li:last-child::before { bottom: auto; height: 17px; }
.tree li.root::before { top: 17px; bottom: 0; height: auto; }
.row { position: relative; height: 30px; display: flex; align-items: center; gap: 7px; padding-left: 29px; font: 15px/30px "Noto Sans CJK SC", sans-serif; color: #000; white-space: nowrap; }
.row::before { content: ""; position: absolute; left: 15px; top: 17px; width: 12px; border-top: 1px dotted #777; }
.row svg { width: 16px; height: 16px; }
.tg { position: absolute; left: 10px; top: 13px; width: 9px; height: 9px; border: 1px solid #919191; border-radius: 1px; background: linear-gradient(#3a58a8, #3a58a8) center / 5px 1px no-repeat #f4f4f4; }
.scroll { width: 17px; background: #f0f0f0; padding: 18px 7px; }
.thumb { width: 2px; height: 82%; background: #858585; }
.splitter { width: 10px; flex: none; background: repeating-conic-gradient(#111 0 25%, #eee 0 50%) 2px 0 / 2px 2px repeat-y #f0f0f0; }
.edge { width: 4px; flex: none; background:
  repeating-conic-gradient(#111 0 25%, #eee 0 50%) 2px 0 / 2px 2px repeat-y,
  linear-gradient(#777, #777) 1px 26px / 1px calc(100% - 53px) no-repeat #e6e6e6; }

/* Workspace */
.workspace { flex: 1; min-width: 0; display: flex; flex-direction: column; }
.doctabs { height: 26px; display: flex; border-bottom: 2px solid #fff; }
.doctab { display: flex; align-items: center; gap: 14px; padding: 2px 8px 0 7px; background: #fff; border-right: 2px solid #777; color: #0078d7; font-weight: 700; font-size: 13px; }
.page { flex: 1; min-height: 0; display: flex; flex-direction: column; background: #f9f9f9; border-top: 2px solid #777; border-right: 5px double #ddd; border-bottom: 4px double #ddd; }
.subtabs { height: 20px; display: flex; align-items: flex-end; border-bottom: 1px solid #e3e3e3; }
.subtabs button, .viewtabs button { height: 17px; background: #f1f1f1; border: 1px solid #e3e3e3; border-bottom: 0; color: #000; padding: 0 4px; white-space: nowrap; font-family: "Noto Sans CJK SC", sans-serif; }
.subtabs button:nth-child(3) { padding: 0 5px; }
.subtabs .on, .viewtabs .on { height: 20px; background: #f9f9f9; }
.subtabs .on { padding: 0 5px 1px; }
.columns { flex: 1; min-height: 0; display: flex; gap: 5px; padding: 3px 7px 10px 4px; }

/* Parameter form */
.params { width: 400px; flex: none; border: 1px solid #646464; font-family: "Noto Sans CJK SC", sans-serif; }
.head { height: 27px; display: flex; align-items: center; padding: 0 9px 0 5px; }
.head h2 { margin-right: auto; padding-top: 2px; }
.head label { display: flex; align-items: center; gap: 8px; padding-bottom: 3px; }
.fit { margin-left: 24px; }
.head input { width: 13px; height: 13px; border-radius: 3px; border-color: #666; }
.head input:checked { background: #0060b8; border-color: #0060b8; }
.head input:checked::after { border-color: #fff; border-width: 0 0 1px 1px; width: 6px; }
.sizes { margin: 0 6px 0 4px; height: 133px; border: 1px solid #646464; padding-left: 4px; display: grid; grid-template-columns: 56px 105px 48px 59px 96px 1fr; grid-template-rows: 27px 35px 35px 34px; align-items: center; }
.sizes label { padding-bottom: 1px; }
.sizes > :nth-child(n+19) { align-self: start; }
.sizes > .spin:nth-child(20) { margin-top: 1px; }
.sizes > label:nth-child(19), .sizes > .unit:nth-child(21) { padding-top: 3px; }
.sizes > .compare { align-self: end; grid-column: 4 / 7; justify-self: end; padding: 0 5px 8px 0; }
a { color: #00f; }
.unit { font-family: "Liberation Mono", monospace; font-size: 10px; padding-top: 1px; }
.spin { display: flex; height: 21px; border: 1px solid #a5a5ab; background: #fff; }
.spin input { flex: 1; min-width: 0; border: 0; padding: 0 0 5px; background: none; text-align: center; font: inherit; color: #000; }
.w94 { width: 94px; }
.w91 { width: 91px; }
.w82 { width: 82px; }
.w69 { width: 69px; }
.w64 { width: 64px; }
.w62 { width: 62px; }
.ud { width: 16px; padding: 1px; display: flex; flex-direction: column; gap: 1px; background: #f0f0f0; }
.ud button { flex: 1; display: grid; place-items: center; background: #fbfbfb; border: 1px solid #d8d8d8; }
.ud button::after { content: ""; border: 3px solid transparent; border-top-width: 0; border-bottom: 4px solid #111; }
.ud button:last-child::after { border-top: 4px solid #111; border-bottom: 0; }
.btn { height: 23px; min-width: 62px; padding-bottom: 1px; border: 1px solid #ccc; border-bottom-color: #b5b5b5; border-radius: 4px; background: #fdfdfd; }
.calc { display: block; width: 79px; height: 30px; margin: 7px 8px 0 auto; color: #3392ea; }
.others { display: flex; align-items: center; height: 55px; margin: -1px 7px 0 6px; padding: 0 4px 0 6px; border: 1px solid #dcdcdc; }
.others legend { padding: 0 1px; line-height: 15px; color: #000; }
.others label { white-space: nowrap; }
.others .w69 { margin: 0 9px; }
.others .w62 { margin: 0 2px 0 7px; }
.others .w64 { margin-left: 7px; }
.head2 { height: 37px; display: flex; align-items: flex-start; justify-content: space-between; padding: 10px 10px 0 9px; }
.head2 h2 { padding-top: 5px; }
.draw { width: 80px; height: 21px; }
.results { height: 190px; margin: 0 4px 0 6px; border: 1px solid #646464; padding: 8px 0 0 5px; display: grid; grid-template-columns: 73px 86px 28px 71px 86px 1fr; grid-template-rows: 33px 33px 31px 37px 33px; align-items: center; white-space: nowrap; }
.results label { padding: 0 0 1px 14px; }
.results .wide { padding-left: 0; }
.results input { width: 60px; height: 21px; padding: 0 0 4px; border: 1px solid #e0e0e0; border-bottom-color: #777; box-shadow: inset 0 0 0 1px #fff; background: #90ee90; text-align: center; font: inherit; color: #000; }
.results .plain { background: #f0f0f0; }
.actions { display: flex; justify-content: flex-end; gap: 7px; padding: 5px 11px 0; }

/* Drawing view */
.view { flex: 1; min-width: 0; display: flex; flex-direction: column; }
.viewtabs { display: flex; align-items: flex-end; height: 20px; padding-left: 2px; border-bottom: 1px solid #e3e3e3; }
.viewtabs button { padding: 0 4px 0 5px; }
.viewtabs .on { padding: 1px 8px 0 6px; }
.canvas { flex: 1; min-height: 0; padding: 2px 3px 0 4px; border-bottom: 10px solid #f0f0f0; }
.canvas svg { width: 100%; height: 100%; background: #000; font-family: "Noto Sans CJK SC", sans-serif; }
.canvas text { text-anchor: middle; }
.zone { fill: #00a8a8; font: 6px "Liberation Sans", sans-serif; }
.side { fill: #aaa; font-size: 8px; }
.dim { fill: #00f000; font: 8px "Liberation Sans", sans-serif; }
.cg { fill: #999; font-size: 7px; }
.tb { fill: #ccc; font-size: 8px; }
.tb .s { font-family: "Liberation Sans", "Noto Sans CJK SC", sans-serif; font-size: 7px; }
.tb .t { font-size: 6px; }
.tb .l { font-size: 9px; }
.tb .en { font: 6px "Liberation Serif", serif; }
.tb .lead { text-anchor: start; }
.log { height: 119px; flex: none; width: 100%; resize: none; overflow: hidden; display: block; border: 1px solid #e3e3e3; border-top: 2px solid #777; border-left: 2px solid #888; outline: 0; padding: 1px; background: #90ee90; font: 12px/16px "Noto Sans CJK SC", sans-serif; color: #000; margin-bottom: 15px; }

/* Status bar */
.statusbar { height: 25px; flex: none; display: flex; align-items: center; justify-content: flex-end; padding-right: 6px; }
.drop { margin: 0 14px 0 48px; }
.toggle { margin-right: 12px; }
.wallpaper { height: 8px; flex: none; border-top: 1px solid #aab89a; background:
  radial-gradient(circle at 353px 10px, #d0502c 4px, transparent 5px),
  radial-gradient(circle at 1193px 10px, #b83a2c 5px, transparent 6px),
  linear-gradient(#eef4dc, #eef4dc) 768px 2px / 36px 6px no-repeat,
  linear-gradient(90deg, #cfe5b8, #d8e8a8 22%, #e6ee9c 38%, #d8e8b0 50%, #e4ee9c 62%, #d2e6c0 85%, #d8e8a8); }
```
